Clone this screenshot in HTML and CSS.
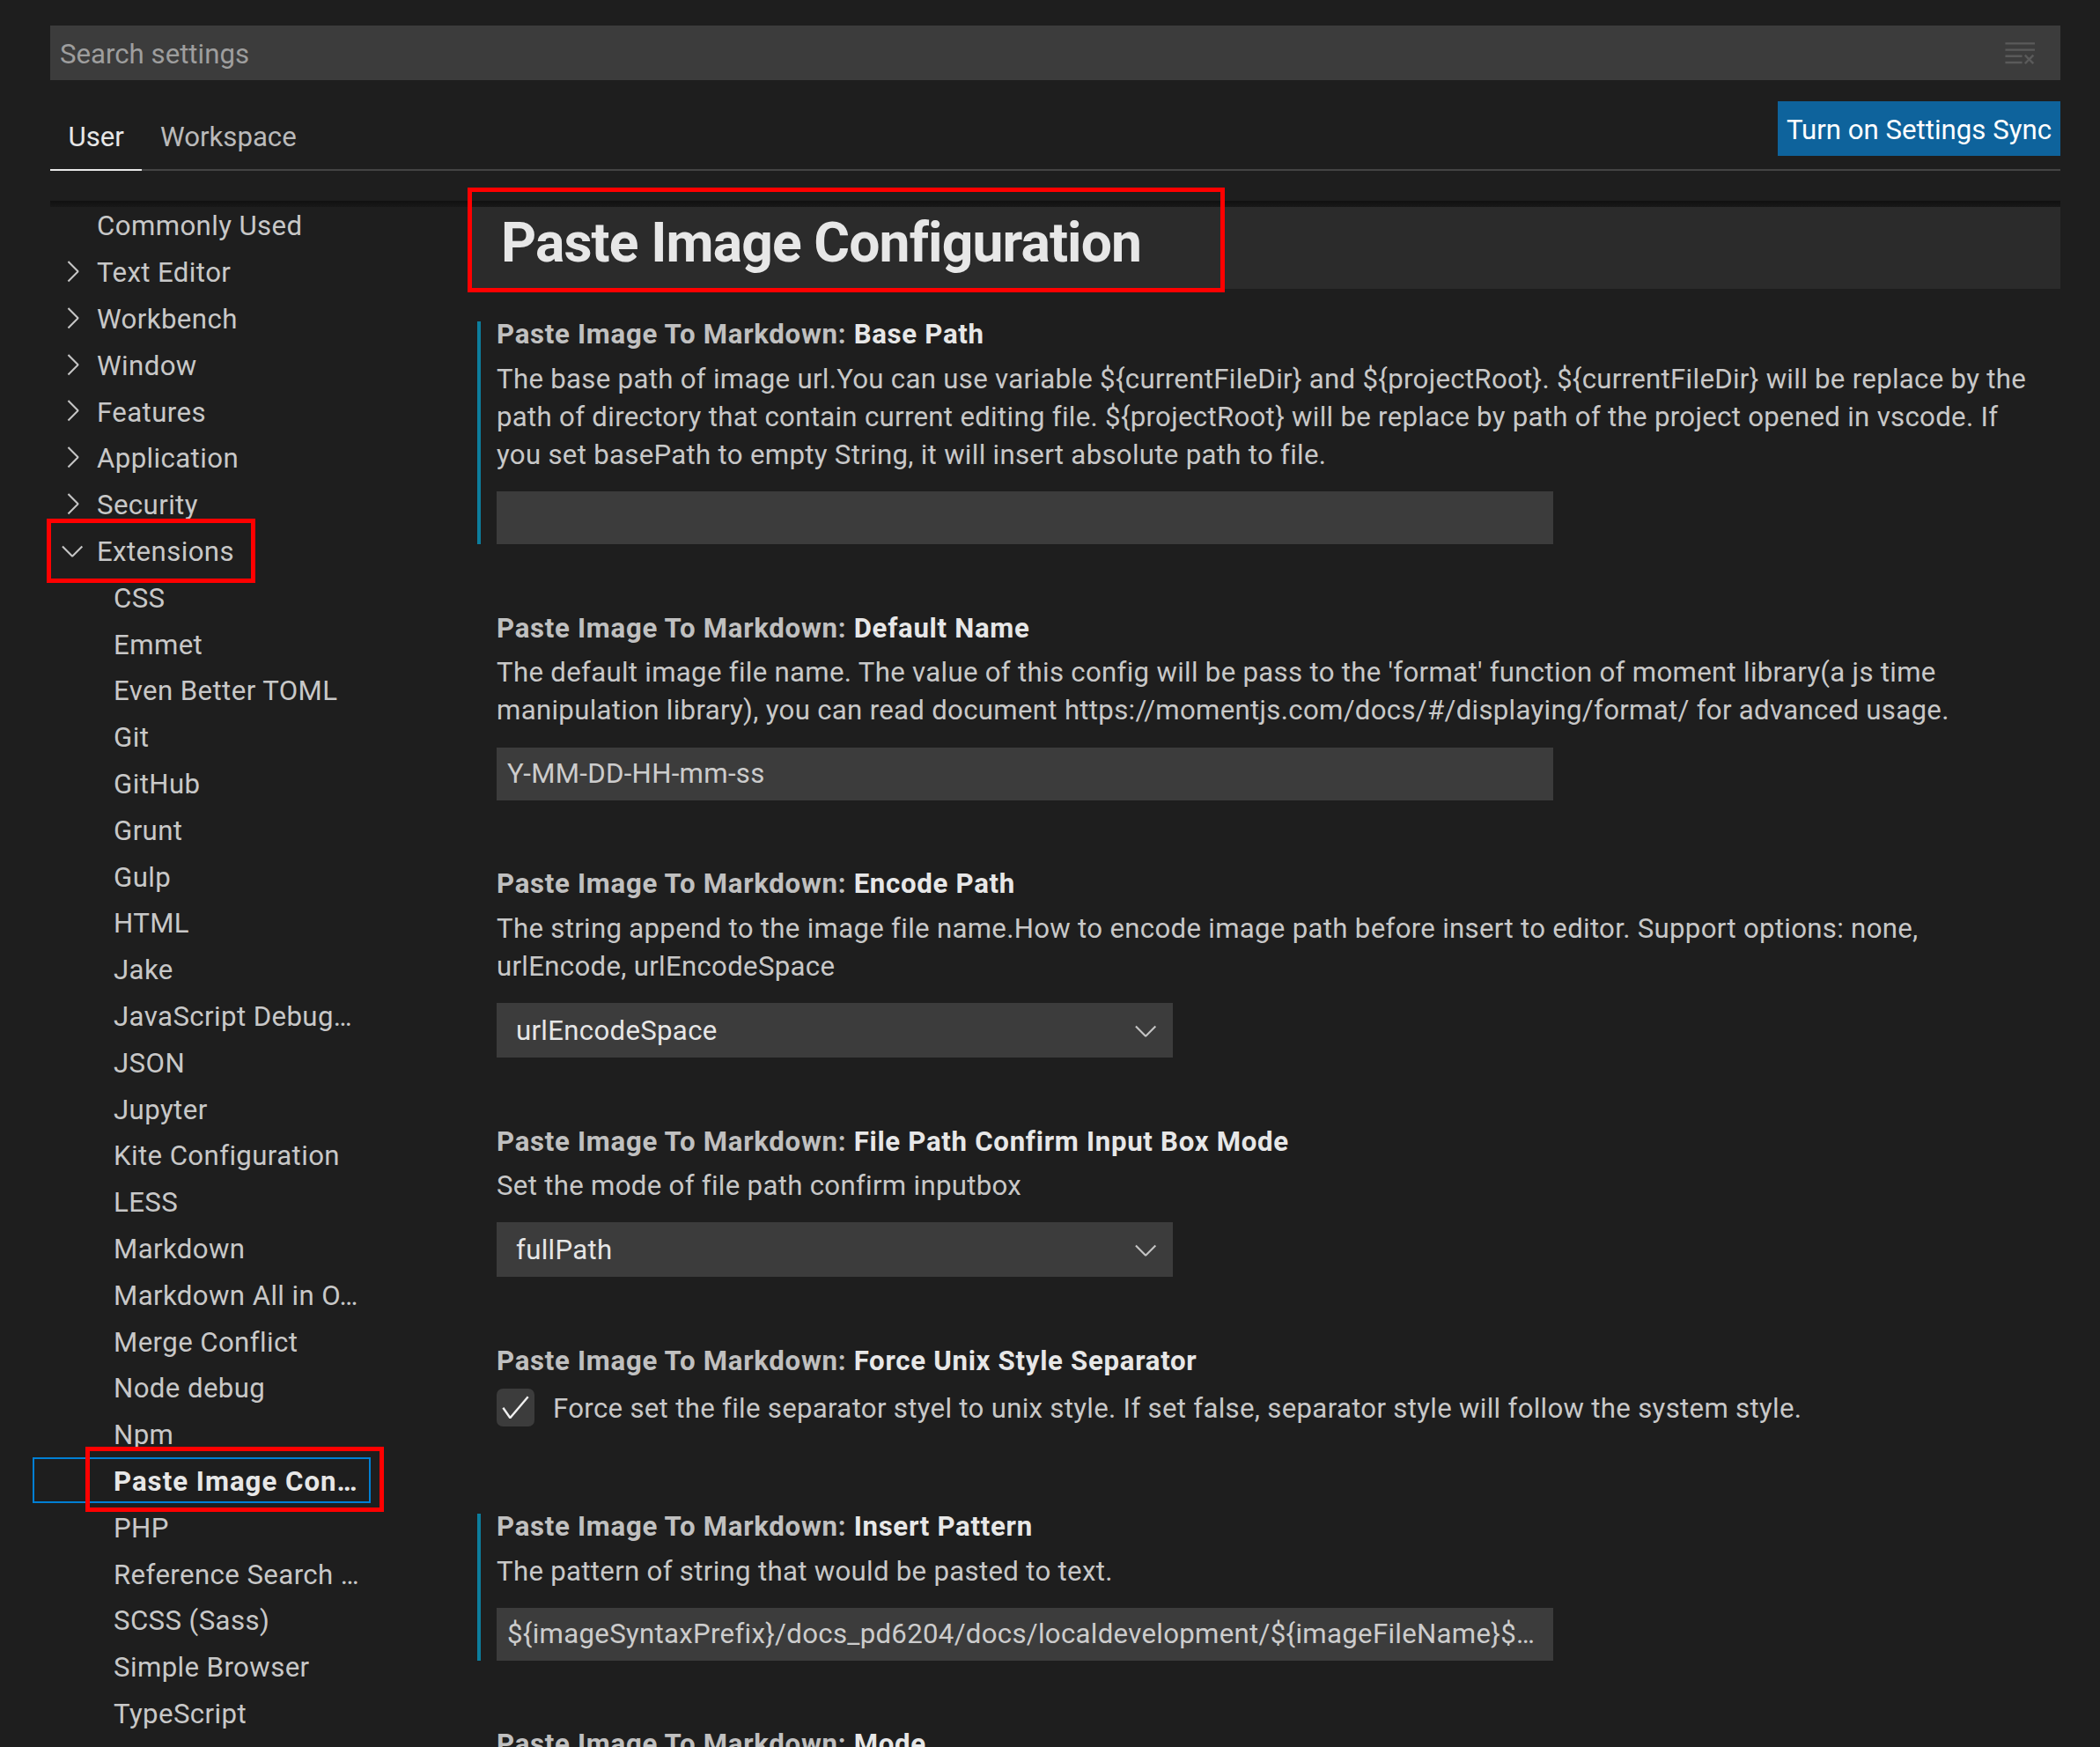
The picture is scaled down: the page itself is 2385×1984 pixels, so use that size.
FILE: index.html
```html
<!DOCTYPE html>
<html lang="en">
<head>
<meta charset="utf-8">
<title>Settings</title>
<link rel="stylesheet" href="styles.css">
</head>
<body>
<div class="editor">
  <div class="top">
    <div class="search">
      <span class="search-placeholder">Search settings</span>
      <svg class="clear-icon" viewBox="0 0 16 16"><path fill="currentColor" d="M10 12.6l.7.7 1.6-1.6 1.6 1.6.8-.7L13 11l1.7-1.6-.8-.8-1.6 1.7-1.6-1.7-.7.8 1.6 1.6-1.6 1.6zM1 4h14V3H1v1zm0 3h14V6H1v1zm8 2.5V9H1v1h8v-.5zM9 13v-1H1v1h8z"/></svg>
    </div>
    <div class="tabs-row">
      <div class="tab active">User</div>
      <div class="tab">Workspace</div>
      <div class="spacer"></div>
      <div class="sync-btn">Turn on Settings Sync</div>
    </div>
  </div>

  <div class="split">
    <nav class="toc">
      <div class="toc-row plain">Commonly Used</div>
      <div class="toc-row parent"><svg class="chev" viewBox="0 0 16 16"><path fill="currentColor" d="M10.072 8.024L5.715 3.667l.618-.62L11 7.716v.618L6.333 13l-.618-.619 4.357-4.357z"/></svg>Text Editor</div>
      <div class="toc-row parent"><svg class="chev" viewBox="0 0 16 16"><path fill="currentColor" d="M10.072 8.024L5.715 3.667l.618-.62L11 7.716v.618L6.333 13l-.618-.619 4.357-4.357z"/></svg>Workbench</div>
      <div class="toc-row parent"><svg class="chev" viewBox="0 0 16 16"><path fill="currentColor" d="M10.072 8.024L5.715 3.667l.618-.62L11 7.716v.618L6.333 13l-.618-.619 4.357-4.357z"/></svg>Window</div>
      <div class="toc-row parent"><svg class="chev" viewBox="0 0 16 16"><path fill="currentColor" d="M10.072 8.024L5.715 3.667l.618-.62L11 7.716v.618L6.333 13l-.618-.619 4.357-4.357z"/></svg>Features</div>
      <div class="toc-row parent"><svg class="chev" viewBox="0 0 16 16"><path fill="currentColor" d="M10.072 8.024L5.715 3.667l.618-.62L11 7.716v.618L6.333 13l-.618-.619 4.357-4.357z"/></svg>Application</div>
      <div class="toc-row parent"><svg class="chev" viewBox="0 0 16 16"><path fill="currentColor" d="M10.072 8.024L5.715 3.667l.618-.62L11 7.716v.618L6.333 13l-.618-.619 4.357-4.357z"/></svg>Security</div>
      <div class="toc-row parent"><svg class="chev" viewBox="0 0 16 16"><path fill="currentColor" d="M7.976 10.072l4.357-4.357.62.618L8.284 11h-.618L3 6.333l.619-.618 4.357 4.357z"/></svg>Extensions<span class="annot annot-ext"></span></div>
      <div class="toc-row child">CSS</div>
      <div class="toc-row child">Emmet</div>
      <div class="toc-row child">Even Better TOML</div>
      <div class="toc-row child">Git</div>
      <div class="toc-row child">GitHub</div>
      <div class="toc-row child">Grunt</div>
      <div class="toc-row child">Gulp</div>
      <div class="toc-row child">HTML</div>
      <div class="toc-row child">Jake</div>
      <div class="toc-row child">JavaScript Debug…</div>
      <div class="toc-row child">JSON</div>
      <div class="toc-row child">Jupyter</div>
      <div class="toc-row child">Kite Configuration</div>
      <div class="toc-row child">LESS</div>
      <div class="toc-row child">Markdown</div>
      <div class="toc-row child">Markdown All in O…</div>
      <div class="toc-row child">Merge Conflict</div>
      <div class="toc-row child">Node debug</div>
      <div class="toc-row child">Npm</div>
      <div class="toc-row child selected">Paste Image Con…<span class="annot annot-sel"></span></div>
      <div class="toc-row child">PHP</div>
      <div class="toc-row child">Reference Search …</div>
      <div class="toc-row child">SCSS (Sass)</div>
      <div class="toc-row child">Simple Browser</div>
      <div class="toc-row child">TypeScript</div>
    </nav>

    <main class="content">
      <div class="group-header">Paste Image Configuration<span class="annot annot-head"></span></div>

      <section class="setting modified">
        <div class="setting-title"><span class="cat">Paste Image To Markdown: </span><span class="key">Base Path</span></div>
        <div class="desc">The base path of image url.You can use variable ${currentFileDir} and ${projectRoot}. ${currentFileDir} will be replace by the<br>path of directory that contain current editing file. ${projectRoot} will be replace by path of the project opened in vscode. If<br>you set basePath to empty String, it will insert absolute path to file.</div>
        <div class="text-input"></div>
      </section>

      <section class="setting">
        <div class="setting-title"><span class="cat">Paste Image To Markdown: </span><span class="key">Default Name</span></div>
        <div class="desc">The default image file name. The value of this config will be pass to the 'format' function of moment library(a js time<br>manipulation library), you can read document https://momentjs.com/docs/#/displaying/format/ for advanced usage.</div>
        <div class="text-input">Y-MM-DD-HH-mm-ss</div>
      </section>

      <section class="setting">
        <div class="setting-title"><span class="cat">Paste Image To Markdown: </span><span class="key">Encode Path</span></div>
        <div class="desc">The string append to the image file name.How to encode image path before insert to editor. Support options: none,<br>urlEncode, urlEncodeSpace</div>
        <div class="select"><span class="select-value">urlEncodeSpace</span><svg class="select-chev" viewBox="0 0 16 16"><path fill="currentColor" d="M7.976 10.072l4.357-4.357.62.618L8.284 11h-.618L3 6.333l.619-.618 4.357 4.357z"/></svg></div>
      </section>

      <section class="setting">
        <div class="setting-title"><span class="cat">Paste Image To Markdown: </span><span class="key">File Path Confirm Input Box Mode</span></div>
        <div class="desc">Set the mode of file path confirm inputbox</div>
        <div class="select"><span class="select-value">fullPath</span><svg class="select-chev" viewBox="0 0 16 16"><path fill="currentColor" d="M7.976 10.072l4.357-4.357.62.618L8.284 11h-.618L3 6.333l.619-.618 4.357 4.357z"/></svg></div>
      </section>

      <section class="setting bool">
        <div class="setting-title"><span class="cat">Paste Image To Markdown: </span><span class="key">Force Unix Style Separator</span></div>
        <div class="bool-row">
          <div class="checkbox"><svg class="check" viewBox="0 0 16 16"><path fill="currentColor" d="M14.431 3.323l-8.47 10-.79-.036-3.35-4.77.818-.574 2.978 4.24 8.051-9.506.764.646z"/></svg></div>
          <div class="bool-desc">Force set the file separator styel to unix style. If set false, separator style will follow the system style.</div>
        </div>
      </section>

      <section class="setting modified">
        <div class="setting-title"><span class="cat">Paste Image To Markdown: </span><span class="key">Insert Pattern</span></div>
        <div class="desc">The pattern of string that would be pasted to text.</div>
        <div class="text-input">${imageSyntaxPrefix}/docs_pd6204/docs/localdevelopment/${imageFileName}$…</div>
      </section>

      <section class="setting">
        <div class="setting-title"><span class="cat">Paste Image To Markdown: </span><span class="key">Mode</span></div>
      </section>
    </main>
  </div>
</div>
</body>
</html>
```
FILE: styles.css
```css
* { box-sizing: border-box; }

html, body {
  margin: 0;
  height: 1984px;
  overflow: hidden;
  background: #1e1e1e;
}

body {
  font-family: Roboto, "Liberation Sans", sans-serif;
  font-size: 31.2px;
  color: #cccccc;
}

.editor {
  padding: 29px 45px 0 37px;
}

.top {
  margin-left: 20px;
}

/* search box */
.search {
  height: 62px;
  background: #3c3c3c;
  display: flex;
  align-items: center;
  padding: 0 27px 0 11px;
}
.search-placeholder {
  flex: 1;
  line-height: 59px;
  padding-top: 3px;
  color: #9e9e9e;
}
.clear-icon {
  width: 38.4px;
  height: 38.4px;
  color: #5a5a5a;
  display: block;
}

/* tabs */
.tabs-row {
  height: 103px;
  border-bottom: 2px solid #444444;
  display: flex;
  align-items: flex-end;
}
.tab {
  line-height: 43.2px;
  padding: 0 20.5px 14.5px;
  border-bottom: 2px solid transparent;
  margin-bottom: -2px;
  color: #bababa;
}
.tab.active {
  color: #e7e7e7;
  border-bottom-color: #e7e7e7;
}
.spacer { flex: 1; }
.sync-btn {
  background: #0e639c;
  color: #ffffff;
  line-height: 59px;
  padding: 3px 10px 0;
  margin-bottom: 15px;
}

/* body split */
.split {
  display: flex;
  margin-top: 34px;
  position: relative;
}
.split::before {
  content: "";
  position: absolute;
  left: 20px;
  right: 0;
  top: 0;
  height: 7px;
  background: linear-gradient(rgba(0,0,0,0.45), rgba(0,0,0,0.2));
  z-index: 3;
}

/* table of contents */
.toc {
  width: 384px;
  flex: none;
  padding-top: 1px;
}
.toc-row {
  height: 52.8px;
  display: flex;
  align-items: center;
  padding-top: 3px;
  white-space: nowrap;
  position: relative;
  color: #c8c8c8;
  letter-spacing: 0.4px;
}
.toc-row.plain { padding-left: 73px; }
.toc-row.parent { padding-left: 26px; }
.toc-row.child { padding-left: 92px; }
.chev {
  width: 38.4px;
  height: 38.4px;
  margin-right: 8.6px;
  margin-top: -3px;
  flex: none;
  color: #c5c5c5;
}
.toc-row.selected {
  outline: 2px solid #007fd4;
  outline-offset: -2px;
  font-weight: 700;
  color: #e7e7e7;
  letter-spacing: 1px;
}

/* red annotation boxes */
.annot {
  position: absolute;
  border: 5px solid #ff0000;
  pointer-events: none;
  z-index: 4;
}
.annot-ext { left: 16px; top: -10px; width: 237px; height: 73px; }
.annot-sel { left: 60px; top: -12px; width: 339px; height: 74px; }
.annot-head { left: 0; top: -22px; width: 860px; height: 119px; }

/* settings list */
.content {
  flex: 1;
  margin-left: 110px;
  min-width: 0;
}
.group-header {
  position: relative;
  margin-top: 7px;
  background: #2b2b2b;
  line-height: 81px;
  padding: 0 0 12px 38px;
  font-size: 62.4px;
  font-weight: 700;
  color: #e7e7e7;
  letter-spacing: -0.9px;
}

.setting {
  position: relative;
  padding: 30.3px 0 43.2px 33px;
}
.setting.modified::before {
  content: "";
  position: absolute;
  left: 11px;
  top: 37px;
  bottom: 43.2px;
  width: 4px;
  background: #0c7d9d;
}
.setting.bool { padding-bottom: 61.2px; }

.setting-title {
  line-height: 43.2px;
  font-weight: 700;
  letter-spacing: 0.7px;
  white-space: nowrap;
}
.cat { color: #c0c0c0; }
.key { color: #e7e7e7; }

.desc {
  margin-top: 7.2px;
  line-height: 43.2px;
  letter-spacing: 0.3px;
  white-space: nowrap;
  color: #c8c8c8;
}

.text-input {
  margin-top: 20.1px;
  width: 1200px;
  height: 60px;
  background: #3c3c3c;
  line-height: 60px;
  padding: 0 12px;
  color: #cccccc;
  letter-spacing: 0.3px;
  white-space: nowrap;
  overflow: hidden;
}

.select {
  margin-top: 20.1px;
  width: 768px;
  height: 62px;
  background: #3c3c3c;
  display: flex;
  align-items: center;
  padding: 0 11.4px 0 22px;
  color: #e6e6e6;
  letter-spacing: 0.3px;
}
.select-value { flex: 1; }
.select-chev {
  width: 38.4px;
  height: 38.4px;
  color: #c5c5c5;
  flex: none;
}

.bool-row {
  margin-top: 9.5px;
  display: flex;
  align-items: flex-start;
}
.checkbox {
  width: 43px;
  height: 43px;
  flex: none;
  background: #3c3c3c;
  border-radius: 7px;
  display: flex;
  align-items: center;
  justify-content: center;
  margin-right: 21px;
}
.check {
  width: 38.4px;
  height: 38.4px;
  color: #f0f0f0;
}
.bool-desc {
  line-height: 43.2px;
  padding-top: 1px;
  letter-spacing: 0.3px;
  white-space: nowrap;
  color: #c8c8c8;
}
```
